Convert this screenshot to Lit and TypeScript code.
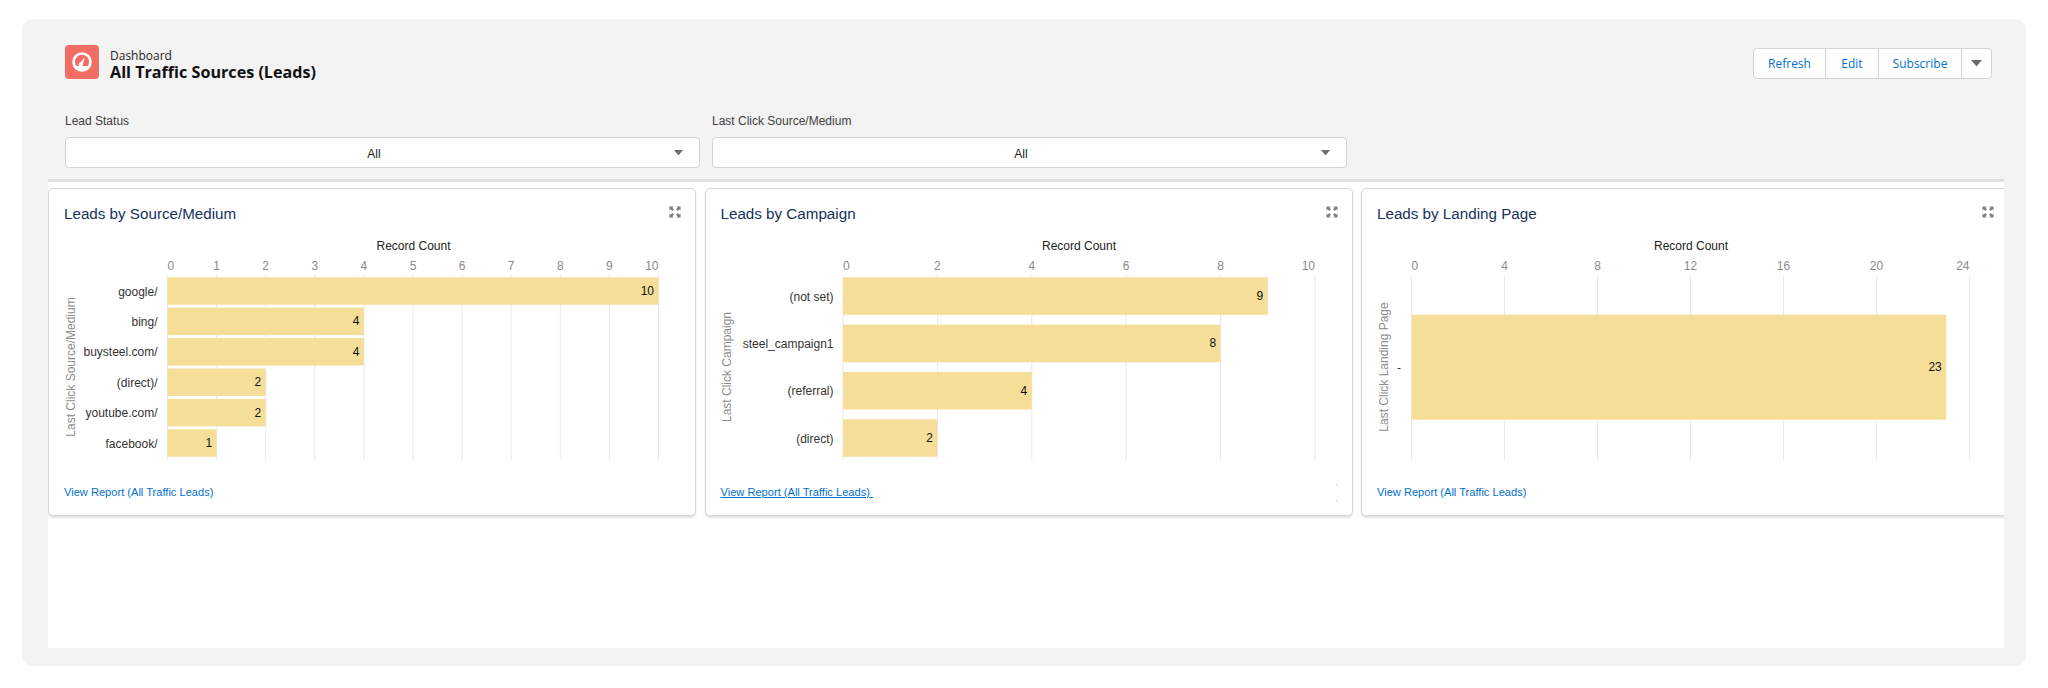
import { LitElement, html, css, svg } from "lit";
import { customElement } from "lit/decorators.js";

interface Chart {
  title: string;
  axis: string;
  x0: number;
  unit: number;
  ticks: number[];
  barH: number;
  rows: { label: string; value: number; top: number }[];
  axisX: number;
  recordX: number;
  labelX: number;
  focused?: boolean;
  titlePad: number;
}

const CHARTS: Chart[] = [
  {
    title: "Leads by Source/Medium",
    axis: "Last Click Source/Medium",
    x0: 118.5,
    unit: 49.1,
    ticks: [0, 1, 2, 3, 4, 5, 6, 7, 8, 9, 10],
    barH: 27.4,
    axisX: 21.5,
    recordX: 364.5,
    labelX: 108.5,
    titlePad: 15,
    rows: [
      { label: "google/", value: 10, top: 41.3 },
      { label: "bing/", value: 4, top: 71.7 },
      { label: "buysteel.com/", value: 4, top: 102.1 },
      { label: "(direct)/", value: 2, top: 132.5 },
      { label: "youtube.com/", value: 2, top: 162.9 },
      { label: "facebook/", value: 1, top: 193.3 },
    ],
  },
  {
    title: "Leads by Campaign",
    axis: "Last Click Campaign",
    x0: 137,
    unit: 47.2,
    ticks: [0, 2, 4, 6, 8, 10],
    barH: 37.5,
    axisX: 21,
    recordX: 373,
    labelX: 127.5,
    focused: true,
    titlePad: 15,
    rows: [
      { label: "(not set)", value: 9, top: 41.3 },
      { label: "steel_campaign1", value: 8, top: 88.7 },
      { label: "(referral)", value: 4, top: 136 },
      { label: "(direct)", value: 2, top: 183.3 },
    ],
  },
  {
    title: "Leads by Landing Page",
    axis: "Last Click Landing Page",
    x0: 49.5,
    unit: 23.25,
    ticks: [0, 4, 8, 12, 16, 20, 24],
    barH: 105,
    axisX: 21.5,
    recordX: 329,
    labelX: 39,
    titlePad: 15,
    rows: [{ label: "-", value: 23, top: 78.7 }],
  },
];

const AXIS_TOP = 39;
const AXIS_BOTTOM = 224;

@customElement("app-root")
export class AppRoot extends LitElement {
  static styles = css`
    :host {
      display: block;
      width: 2048px;
      height: 688px;
      box-sizing: border-box;
      padding: 19px 22px 22px;
      background: #fff;
      font-family: "Liberation Sans", Arial, sans-serif;
    }
    .panel {
      height: 647px;
      box-sizing: border-box;
      background: #f3f3f3;
      border-radius: 11px;
      padding: 26px 22px 18px 26px;
      display: flex;
      flex-direction: column;
    }
    .top {
      padding: 0 12px 0 17px;
    }
    .header {
      display: flex;
      justify-content: space-between;
      align-items: flex-start;
      height: 34px;
    }
    .id {
      display: flex;
      align-items: flex-start;
      gap: 11px;
    }
    .idtext {
      padding-top: 3px;
    }
    .logo {
      width: 34px;
      height: 34px;
      border-radius: 4px;
      background: #f26d63;
      display: block;
    }
    .crumb {
      font-family: "Open Sans", sans-serif;
      font-size: 12px;
      line-height: 15px;
      color: #222;
    }
    .name {
      font-family: "Open Sans", sans-serif;
      font-size: 16.15px;
      line-height: 19px;
      font-weight: 700;
      color: #111;
    }
    .btns {
      display: flex;
      height: 31px;
      margin-top: 3px;
      box-sizing: border-box;
      border: 1px solid #d4d4d4;
      border-radius: 4px;
      background: #fff;
      overflow: hidden;
    }
    .btn {
      display: flex;
      align-items: center;
      justify-content: center;
      box-sizing: border-box;
      font-family: "Open Sans", sans-serif;
      font-size: 12px;
      color: #0070d2;
      border-left: 1px solid #d4d4d4;
    }
    .btn:first-child {
      border-left: 0;
    }
    .b1 { width: 71px; }
    .b2 { width: 53px; }
    .b3 { width: 83px; }
    .b4 { width: 30px; }
    .filters {
      display: flex;
      gap: 12px;
      margin-top: 34px;
    }
    .filter {
      width: 635px;
    }
    .flabel {
      font-size: 12px;
      line-height: 16px;
      color: #3e3e3c;
      margin-bottom: 8px;
    }
    .select {
      height: 31px;
      box-sizing: border-box;
      border: 1px solid #d4d4d4;
      border-radius: 4px;
      background: #fff;
      display: flex;
      align-items: center;
      padding: 2px 16px 0 8px;
      font-size: 12px;
      color: #222;
    }
    .select span {
      flex: 1;
      text-align: center;
    }
    .select svg {
      margin-top: -2px;
    }
    .rule {
      height: 3px;
      margin-top: 11px;
      background: #e2e2e2;
    }
    .canvas {
      flex: 1;
      background: #fff;
      overflow: hidden;
      padding-top: 6px;
      display: flex;
      gap: 8.5px;
      align-items: flex-start;
    }
    .card {
      flex: 0 0 648px;
      height: 328px;
      box-sizing: border-box;
      border: 1px solid #d6d6d6;
      border-radius: 5px;
      background: #fff;
      box-shadow: 0 2px 2px rgba(0, 0, 0, 0.12);
    }
    .chead {
      display: flex;
      justify-content: space-between;
      align-items: flex-start;
      height: 20px;
      padding: 15px 14px 12px 16px;
    }
    .chead svg {
      margin-top: 1.5px;
    }
    .ctitle {
      font-size: 15.2px;
      line-height: 20px;
      color: #16325c;
    }
    .chart {
      display: block;
    }
    .cfoot {
      padding: 20px 0 0 16px;
      font-size: 11.1px;
      line-height: 16px;
      color: #0070d2;
      display: flex;
      justify-content: space-between;
    }
    .under {
      text-decoration: underline;
    }
    .dots {
      width: 1px;
      height: 17px;
      margin-right: 15px;
      border-top: 1px solid #9dbfe0;
      border-bottom: 1px solid #9dbfe0;
      box-sizing: border-box;
    }
    .plot-grid { stroke: #e6ebf1; stroke-width: 1; }
    .plot-bar { fill: #f5de98; }
    text { font-family: "Liberation Sans", Arial, sans-serif; font-size: 12px; }
    .t-rec { fill: #222; }
    .t-tick { fill: #8a8a8a; }
    .t-cat { fill: #333; }
    .t-val { fill: #111; }
    .t-axis { fill: #8c8c8c; }
  `;

  private caret(w: number) {
    return html`<svg width=${w} height=${w * 0.6} viewBox="0 0 10 6" aria-hidden="true">
      <path d="M0 0H10L5 6Z" fill="#6b6b6b"></path>
    </svg>`;
  }

  private expand() {
    return html`<svg width="12" height="12" viewBox="0 0 13 13" aria-hidden="true">
      <g fill="#7c7a77">
        <path d="M0.5 0.5H5L3.6 1.9L5.3 3.6L3.6 5.3L1.9 3.6L0.5 5Z"></path>
        <path d="M12.5 0.5H8L9.4 1.9L7.7 3.6L9.4 5.3L11.1 3.6L12.5 5Z"></path>
        <path d="M0.5 12.5H5L3.6 11.1L5.3 9.4L3.6 7.7L1.9 9.4L0.5 8Z"></path>
        <path d="M12.5 12.5H8L9.4 11.1L7.7 9.4L9.4 7.7L11.1 9.4L12.5 8Z"></path>
      </g>
    </svg>`;
  }

  private plot(c: Chart) {
    const px = (v: number) => c.x0 + v * c.unit;
    const midY = 131;
    return html`<svg class="chart" width="646" height="228" viewBox="0 0 646 228">
      <text class="t-rec" x=${c.recordX} y="14" text-anchor="middle">Record Count</text>
      ${c.ticks.map((t, i) => {
        const anchor = i === 0 ? "start" : i === c.ticks.length - 1 ? "end" : "middle";
        return svg`<text class="t-tick" x=${px(t)} y="34" text-anchor=${anchor}>${t}</text>
          <line class="plot-grid" x1=${px(t)} x2=${px(t)} y1=${AXIS_TOP} y2=${AXIS_BOTTOM}></line>`;
      })}
      ${c.rows.map((r) => {
        const cy = r.top + c.barH / 2;
        return svg`<rect class="plot-bar" x=${c.x0} y=${r.top} width=${r.value * c.unit} height=${c.barH}></rect>
          <text class="t-cat" x=${c.labelX} y=${cy + 4.5} text-anchor="end">${r.label}</text>
          <text class="t-val" x=${px(r.value) - 4.5} y=${cy + 4} text-anchor="end">${r.value}</text>`;
      })}
      <text class="t-axis" transform="translate(${c.axisX + 4} ${midY}) rotate(-90)" text-anchor="middle">${c.axis}</text>
    </svg>`;
  }

  render() {
    return html`<div class="panel">
      <div class="top">
        <div class="header">
          <div class="id">
            <svg class="logo" viewBox="0 0 34 34" aria-hidden="true">
              <circle cx="17" cy="17" r="9.8" fill="#fff"></circle>
              <path d="M11.4 21A7 7 0 1 1 22.6 21Z" fill="#f26d63"></path>
              <circle cx="15.8" cy="19.6" r="2.1" fill="#fff"></circle>
              <path d="M14.6 18.6L20 12L17.4 20.6Z" fill="#fff"></path>
            </svg>
            <div class="idtext">
              <div class="crumb">Dashboard</div>
              <div class="name">All Traffic Sources (Leads)</div>
            </div>
          </div>
          <div class="btns">
            <div class="btn b1">Refresh</div>
            <div class="btn b2">Edit</div>
            <div class="btn b3">Subscribe</div>
            <div class="btn b4">${this.caret(11)}</div>
          </div>
        </div>
        <div class="filters">
          <div class="filter">
            <div class="flabel">Lead Status</div>
            <div class="select"><span>All</span>${this.caret(9)}</div>
          </div>
          <div class="filter">
            <div class="flabel">Last Click Source/Medium</div>
            <div class="select"><span>All</span>${this.caret(9)}</div>
          </div>
        </div>
      </div>
      <div class="rule"></div>
      <div class="canvas">
        ${CHARTS.map(
          (c) => html`<div class="card">
            <div class="chead" style="padding-left:${c.titlePad}px">
              <div class="ctitle">${c.title}</div>
              ${this.expand()}
            </div>
            ${this.plot(c)}
            <div class="cfoot" style="padding-left:${c.titlePad}px">
              <span class=${c.focused ? "under" : ""}>View Report (All Traffic Leads)${c.focused ? "\u00a0" : ""}</span>
              ${c.focused ? html`<div class="dots"></div>` : ""}
            </div>
          </div>`
        )}
      </div>
    </div>`;
  }
}
